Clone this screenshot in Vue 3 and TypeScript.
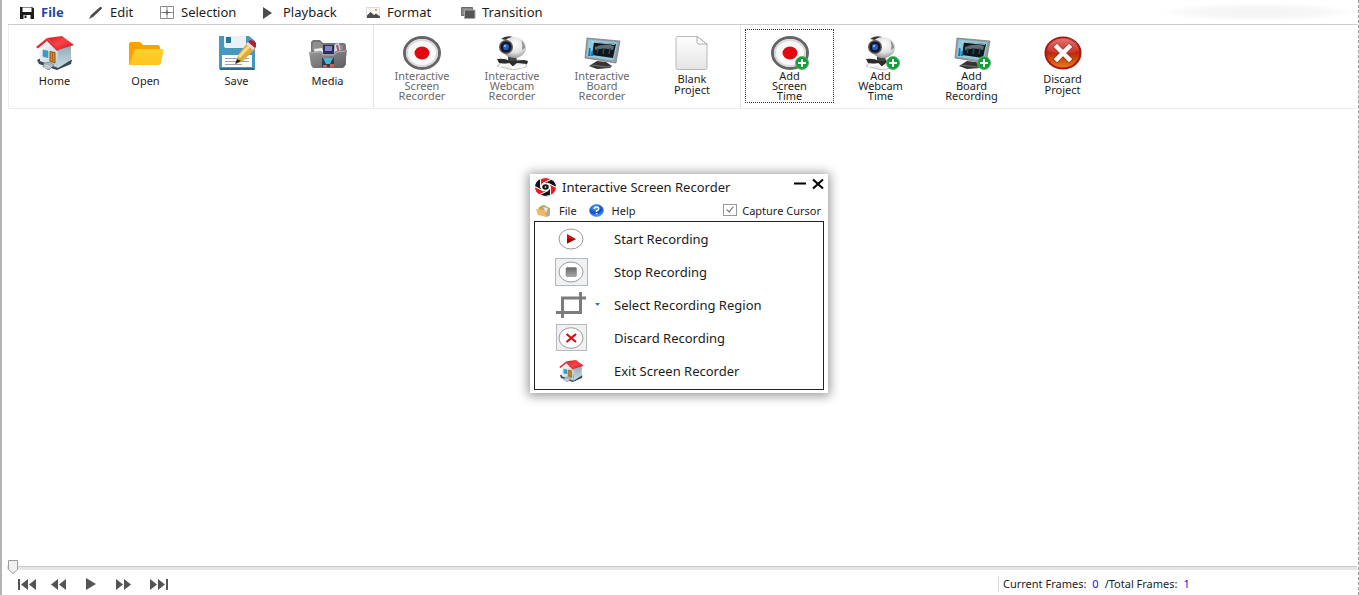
<script setup lang="ts">
import { computed, ref } from 'vue'

interface MenuEntry { label: string; icon: string; active?: boolean }
interface Tool { lines: string[]; icon: string; plus?: boolean; muted?: boolean; focused?: boolean }
interface Action { label: string; icon: string; kind: string; menu?: boolean }

const menu: MenuEntry[] = [
  { label: 'File', icon: 'floppy', active: true },
  { label: 'Edit', icon: 'pen' },
  { label: 'Selection', icon: 'grid' },
  { label: 'Playback', icon: 'tri' },
  { label: 'Format', icon: 'image' },
  { label: 'Transition', icon: 'layers' },
]

const groups: Tool[][] = [
  [
    { lines: ['Home'], icon: 'home' },
    { lines: ['Open'], icon: 'folder' },
    { lines: ['Save'], icon: 'save' },
    { lines: ['Media'], icon: 'media' },
  ],
  [
    { lines: ['Interactive', 'Screen', 'Recorder'], icon: 'record', muted: true },
    { lines: ['Interactive', 'Webcam', 'Recorder'], icon: 'webcam', muted: true },
    { lines: ['Interactive', 'Board', 'Recorder'], icon: 'board', muted: true },
    { lines: ['Blank', 'Project'], icon: 'blank' },
  ],
  [
    { lines: ['Add', 'Screen', 'Time'], icon: 'record', plus: true, focused: true },
    { lines: ['Add', 'Webcam', 'Time'], icon: 'webcam', plus: true },
    { lines: ['Add', 'Board', 'Recording'], icon: 'board', plus: true },
    { lines: ['Discard', 'Project'], icon: 'discard' },
  ],
]

const actions: Action[] = [
  { label: 'Start Recording', icon: 'start', kind: 'plain' },
  { label: 'Stop Recording', icon: 'stop', kind: 'framed' },
  { label: 'Select Recording Region', icon: 'crop', kind: 'plain', menu: true },
  { label: 'Discard Recording', icon: 'cancel', kind: 'framed narrow' },
  { label: 'Exit Screen Recorder', icon: 'home', kind: 'plain small' },
]

const transport = [
  { label: 'First frame', icon: 'first' },
  { label: 'Step back', icon: 'back' },
  { label: 'Play', icon: 'play' },
  { label: 'Step forward', icon: 'forward' },
  { label: 'Last frame', icon: 'last' },
]

const frame = ref(0)
const total = ref(1)
const captureCursor = ref(true)
const thumbLeft = computed(() => `calc((100% - 12px) * ${frame.value / total.value})`)
</script>

<template>
  <div class="app">
    <svg class="defs" aria-hidden="true">
      <defs>
        <linearGradient id="gRoof" x1="0" y1="0" x2="1" y2="1"><stop offset="0" stop-color="#d81c20" /><stop offset=".5" stop-color="#fb4347" /><stop offset="1" stop-color="#c40d14" /></linearGradient>
        <linearGradient id="gWall" x1="0" y1="0" x2="1" y2="1"><stop offset="0" stop-color="#ffffff" /><stop offset="1" stop-color="#b4ccd8" /></linearGradient>
        <linearGradient id="gSide" x1="0" y1="0" x2="0" y2="1"><stop offset="0" stop-color="#8fa9b6" /><stop offset="1" stop-color="#c8dde6" /></linearGradient>
        <linearGradient id="gFolder" x1="0" y1="0" x2="0" y2="1"><stop offset="0" stop-color="#ffd02c" /><stop offset="1" stop-color="#ffc51f" /></linearGradient>
        <linearGradient id="gMetal" x1="0" y1="0" x2="1" y2="1"><stop offset="0" stop-color="#989898" /><stop offset="1" stop-color="#5c5c5c" /></linearGradient>
        <linearGradient id="gPage" x1="0" y1="0" x2="0" y2="1"><stop offset="0" stop-color="#ffffff" /><stop offset="1" stop-color="#e4e4e4" /></linearGradient>
        <linearGradient id="gRed" x1="0" y1="0" x2="0" y2="1"><stop offset="0" stop-color="#e0655c" /><stop offset=".45" stop-color="#c41a14" /><stop offset=".55" stop-color="#bc3404" /><stop offset="1" stop-color="#ec7c20" /></linearGradient>
        <linearGradient id="gStop" x1="0" y1="0" x2="0" y2="1"><stop offset="0" stop-color="#686868" /><stop offset="1" stop-color="#a8a8ac" /></linearGradient>
        <radialGradient id="gBall" cx=".55" cy=".35" r=".65"><stop offset="0" stop-color="#ffffff" /><stop offset=".6" stop-color="#e2e2e2" /><stop offset="1" stop-color="#9b9b9b" /></radialGradient>
        <radialGradient id="gHelp" cx=".4" cy=".25" r=".8"><stop offset="0" stop-color="#5c9cf0" /><stop offset=".6" stop-color="#0c50d0" /><stop offset="1" stop-color="#58b8f8" /></radialGradient>
      </defs>

      <symbol id="floppy" viewBox="0 0 15 13"><path d="M0 1h12l2 1.500V13H0z" fill="#1b1b1b" /><path d="M2.500 1.500h9V6h-9z" fill="#fff" /><path d="M3.500 9h7v4h-7z" fill="#fff" /><path d="M4.500 9.500h2V12h-2z" fill="#1b1b1b" /></symbol>
      <symbol id="pen" viewBox="0 0 15 13"><path d="M0 13l2-4 9-8 1.500 0 .5 1.500L4 11z" fill="#4b4b4b" /></symbol>
      <symbol id="grid" viewBox="0 0 15 13"><path d="M.5.5h13v12H.5zM7 .5v12M.5 6.500h13" fill="none" stroke="#8c8c8c" /><path d="M7 4v5M4.500 6.500h5" stroke="#5c5c5c" /></symbol>
      <symbol id="tri" viewBox="0 0 15 13"><path d="M1 1l9 6-9 6z" fill="#4c4c4c" /></symbol>
      <symbol id="image" viewBox="0 0 15 13"><path d="M.5 1.500h13v10H.5z" fill="#f8f8f8" stroke="#dcdcdc" /><path d="M1 12V9.500L4.500 6 8 9l2-1.500 4 3V12z" fill="#4c4c4c" /><circle cx="10" cy="4" r="1.200" fill="#f6a04c" /></symbol>
      <symbol id="layers" viewBox="0 0 15 13"><path d="M.5 1.500h11v8H.5z" fill="#8a8a8a" stroke="#6a6a6a" /><path d="M3.500 4h10.500v8.500H3.500z" fill="#555" stroke="#aaa" /></symbol>

      <symbol id="home" viewBox="0 0 38 34">
        <path d="M1 24l6-3 29 3-1 4-14 6-18-6z" fill="#3a4853" />
        <path d="M3 11l8-7 11 10v18L4 25z" fill="url(#gWall)" />
        <path d="M22 13l13-4v15l-13 8z" fill="url(#gSide)" />
        <path d="M11 2L26 0l12 9-16 5z" fill="url(#gRoof)" />
        <path d="M11 2L0 11l2 1.500L11 5l10 10 2-1z" fill="#d8343a" />
        <path d="M7 14l5 1v6.500l-5-1z" fill="#26a0dc" stroke="#6b8c9c" stroke-width=".7" />
        <path d="M14 15.500l5 1V27l-5-2z" fill="#e08a20" stroke="#84450a" stroke-width=".9" />
        <path d="M16.500 17v8" stroke="#8b4b10" stroke-width=".7" />
        <path d="M8 27l6-1 4 3-5 5-6-3z" fill="#a9b6be" stroke="#6a7981" stroke-width=".6" />
        <path d="M9 29l6 2M8 31l5 1" stroke="#dfe6ea" stroke-width=".8" />
      </symbol>
      <symbol id="folder" viewBox="0 0 38 34">
        <path d="M2 29V8q0-2 2-2h8q2 0 3 2l1 1h14q3 0 3 3v3z" fill="#ff9f00" />
        <path d="M10 13h25q2 0 1.500 2L34 27q-.5 2-3 2H5q-3 0-2.500-1L7 15q.8-2 3-2z" fill="url(#gFolder)" />
      </symbol>
      <symbol id="save" viewBox="0 0 38 34">
        <path d="M1 0h30l6 5v29H3q-2 0-2-2z" fill="#4698bf" />
        <path d="M6 0h22v10q0 2-2 2H8q-2 0-2-2z" fill="#e9f1f4" />
        <path d="M8 1h5v6H8z" fill="#2b7398" />
        <path d="M4 19h30v12H4z" fill="#fff" />
        <path d="M7 22.500h24M7 25.500h24M7 28.500h17" stroke="#838c93" stroke-width=".8" />
        <path d="M2 32h34v2H2z" fill="#286e94" />
        <path d="M29 7l8 6-12 12-7 3 2-9z" fill="#e4a83c" />
        <path d="M32 9L21 21" stroke="#fbdc88" stroke-width="3" />
        <path d="M30 6l2-2q4 0 7 4l-1 3-2 2z" fill="#b51d2c" />
        <path d="M28 8l2-2 7 6-2 2z" fill="#dcdfe0" />
        <path d="M17 28l2-5 4 2z" fill="#222" />
      </symbol>
      <symbol id="media" viewBox="0 0 38 34">
        <path d="M2 29V6l2-2h7l3 3h20q3 0 3 3v19z" fill="#747474" />
        <path d="M4 6h7l2 3h21v5H3z" fill="#8f8f8f" />
        <path d="M5 13l8-1 2 6-9 3z" fill="#eee" />
        <path d="M14 9h11v9H14z" fill="#302c5d" />
        <path d="M16 10h7v5h-7z" fill="#8088cc" />
        <path d="M26 8l4-1 2 10h-7z" fill="#c4e1ec" />
        <path d="M28 9l2 8" stroke="#be4666" stroke-width="2" />
        <path d="M0 16l12-1 3 3h9l3-3 11-1-2 16-2 2H4l-2-3z" fill="url(#gMetal)" />
        <path d="M1 17l10-1 3 3h11l3-3 9-1" fill="none" stroke="#b0b0b0" />
        <path d="M13 22h12v9H13z" fill="#2f3858" />
        <path d="M14 22h10l-3 6h-4z" fill="#4cb4d0" />
        <path d="M14 29h4v2h-4zM21 28h4v3h-4z" fill="#d0604c" />
      </symbol>
      <symbol id="record" viewBox="0 0 38 34">
        <ellipse cx="19" cy="17" rx="17.500" ry="15.500" fill="#fafafa" stroke="#666" stroke-width="3" />
        <ellipse cx="19" cy="17" rx="15" ry="13" fill="none" stroke="#dadada" stroke-width="2" />
        <ellipse cx="19" cy="17" rx="7.500" ry="6.500" fill="#e30911" />
      </symbol>
      <symbol id="webcam" viewBox="0 0 38 34">
        <path d="M4 30l6-5 16-1 8 2-1 5-13 3z" fill="#f0f0f0" stroke="#b0b0b0" stroke-width=".8" />
        <path d="M4 23q8-1 13 2l14-1 4 1-1 3-10-1-5 4-4-3-9-1z" fill="#2c2c2c" />
        <path d="M15 20h8l1 5h-9z" fill="#444" />
        <path d="M6 30l10-2 4 4 12-2" fill="none" stroke="#fff" stroke-width="2" />
        <path d="M8 3q5-4 12-2l-2 4z" fill="#333" />
        <ellipse cx="21" cy="11.500" rx="12" ry="10.500" fill="url(#gBall)" />
        <path d="M28 4q4 3 4 8l-3 2q1-6-1-10z" fill="#909090" />
        <ellipse cx="13" cy="11" rx="7" ry="7" fill="#565a5e" />
        <ellipse cx="13" cy="11" rx="5.500" ry="5.500" fill="#12161f" />
        <ellipse cx="13" cy="11" rx="3" ry="3.200" fill="#285ec6" />
        <circle cx="12" cy="10" r="1" fill="#a4c8ff" />
      </symbol>
      <symbol id="board" viewBox="0 0 38 34">
        <path d="M14 25l9 1 6 4-2 2-13 1-8-3z" fill="#353535" />
        <path d="M8 29l16 2 5-1" fill="none" stroke="#888" stroke-width=".8" />
        <path d="M4 2l33 3-4 22-31-5z" fill="#9a9e9e" stroke="#70757a" stroke-width=".7" />
        <path d="M5.500 3.500l29 3-4 18-27-4z" fill="#8ecbe0" />
        <path d="M11 6l22 2-3 14-21-3z" fill="#10161c" />
        <path d="M12 11q9-4 19-1l-1 4q-9-3-18 0z" fill="#5c7078" />
        <path d="M15 12l-1 5M21 12l-1 6M27 12l-1 6" stroke="#344850" stroke-width="1.500" />
        <path d="M6 12h1.500v8H5zM8.500 15h1.500v5H8z" fill="#0879b7" />
        <path d="M9 6l23 2.500" stroke="#c4e4ee" stroke-width=".8" />
      </symbol>
      <symbol id="blank" viewBox="0 0 38 34">
        <path d="M5 .5h19l10 7.500v23.500q0 2-2 2H5q-2 0-2-2v-29q0-2 2-2z" fill="url(#gPage)" stroke="#b8b8b8" />
        <path d="M24 .5v6q0 1.500 2 1.500h8z" fill="#fff" stroke="#aaa" />
      </symbol>
      <symbol id="discard" viewBox="0 0 38 34">
        <ellipse cx="19" cy="17" rx="17.500" ry="15.500" fill="url(#gRed)" stroke="#a71714" stroke-width="2" />
        <path d="M3 15q1-12 16-13t16 13q-15 5-32 0z" fill="#fff" opacity=".13" />
        <path d="M13 11l12 12M25 11L13 23" stroke="#8f2010" stroke-width="6.500" stroke-linecap="square" opacity=".35" />
        <path d="M13 11l12 12M25 11L13 23" stroke="#fff" stroke-width="4.500" stroke-linecap="square" />
      </symbol>
      <symbol id="plus" viewBox="0 0 14 14"><circle cx="7" cy="7" r="6.500" fill="#159c39" stroke="#58bb6e" /><path d="M7 3v8M3 7h8" stroke="#fff" stroke-width="2" /></symbol>

      <symbol id="aperture" viewBox="0 0 24 20">
        <g transform="translate(12 10) scale(1.15 .98)" stroke="#fff" stroke-width=".9">
          <path v-for="n in 6" :key="n" d="M4.500 0V8.930A10 10 0 0 1-5.480 8.360L2.250 3.900z" :fill="n % 2 ? '#f01820' : '#141414'" :transform="`rotate(${n * 60})`" />
        </g>
        <ellipse cx="12" cy="10" rx="5" ry="4.200" fill="#fff" />
        <ellipse cx="12" cy="10" rx="3.400" ry="2.900" fill="#141414" />
        <circle cx="12" cy="10" r="1" fill="#bbb" />
      </symbol>
      <symbol id="files" viewBox="0 0 15 13">
        <path d="M2 4l5-3 7 3v7l-4 2z" fill="#d8a04c" /><path d="M4 3l4-2 3 2-2 4z" fill="#8cba70" /><path d="M7 3l5 1-2 5z" fill="#e6e9e1" /><path d="M0 5l8 1 3 7-9-2z" fill="#f0b860" /><path d="M11 13V7l3-2v6z" fill="#8cb4c4" />
      </symbol>
      <symbol id="help" viewBox="0 0 15 13"><ellipse cx="7.500" cy="6.500" rx="7" ry="6" fill="url(#gHelp)" stroke="#3a78d8" stroke-width=".6" /><path d="M5.300 5q0-2 2.200-2t2.200 1.700Q9.700 6 7.600 6.700V8" fill="none" stroke="#fff" stroke-width="1.500" /><path d="M6.800 9h1.600v1.400H6.800z" fill="#fff" /></symbol>
      <symbol id="start" viewBox="0 0 26 22"><ellipse cx="13" cy="11" rx="12" ry="10" fill="#fff" stroke="#9a9a9a" /><path d="M9 6l9 5-9 4.500z" fill="#d50d12" /><path d="M9 11h9l-9 4.500z" fill="#980408" /></symbol>
      <symbol id="stop" viewBox="0 0 26 22"><ellipse cx="13" cy="11" rx="12" ry="10" fill="#fff" stroke="#9a9a9a" /><rect x="8" y="6.500" width="10.500" height="9" rx="1" fill="url(#gStop)" stroke="#777" stroke-width=".5" /></symbol>
      <symbol id="cancel" viewBox="0 0 26 22"><ellipse cx="13" cy="11" rx="12" ry="10.300" fill="#fff" stroke="#9a9a9a" /><path d="M8.500 7l9.500 8M18 7l-9.500 8" stroke="#d30d12" stroke-width="2.200" /></symbol>
      <symbol id="crop" viewBox="0 0 30 26"><path d="M0 20.500h24.500V0M6.500 26V6H30" fill="none" stroke="#7c7c7c" stroke-width="3" /></symbol>

      <symbol id="first" viewBox="0 0 20 12"><path d="M1 1h2v11H1zM11 1v11L4 6.500zM19 1v11l-7-5.500z" fill="#555" /></symbol>
      <symbol id="back" viewBox="0 0 20 12"><path d="M8 1v11L1 6.500zM16 1v11l-7-5.500z" fill="#555" /></symbol>
      <symbol id="play" viewBox="0 0 20 12"><path d="M3 0l10 6-10 6z" fill="#555" /></symbol>
      <symbol id="forward" viewBox="0 0 20 12"><path d="M0 1v11l7-5.500zM8 1v11l7-5.500z" fill="#555" /></symbol>
      <symbol id="last" viewBox="0 0 20 12"><path d="M1 1v11l7-5.500zM9 1v11l7-5.500zM17 1h2v11h-2z" fill="#555" /></symbol>
    </svg>

    <nav class="menubar" aria-label="Main menu">
      <button v-for="m in menu" :key="m.label" class="menu-item" :class="{ active: m.active }" type="button">
        <svg class="menu-icon" aria-hidden="true"><use :href="'#' + m.icon" /></svg>
        <span>{{ m.label }}</span>
      </button>
      <span class="smudge"></span>
    </nav>

    <div class="ribbon" role="toolbar" aria-label="File">
      <div v-for="(g, i) in groups" :key="i" class="group">
        <button v-for="t in g" :key="t.lines.join(' ')" type="button" class="tool" :class="['rows-' + t.lines.length, { muted: t.muted, focused: t.focused }]">
          <span class="pic">
            <svg class="tool-icon" aria-hidden="true"><use :href="'#' + t.icon" /></svg>
            <svg v-if="t.plus" class="plus" aria-hidden="true"><use href="#plus" /></svg>
          </span>
          <span class="caption"><span v-for="l in t.lines" :key="l" class="line">{{ l }}</span></span>
        </button>
      </div>
    </div>

    <main class="stage">
      <section class="dialog" role="dialog" aria-labelledby="recorder-title">
        <header class="titlebar">
          <svg class="logo" aria-hidden="true"><use href="#aperture" /></svg>
          <h1 id="recorder-title">Interactive Screen Recorder</h1>
          <button class="win" type="button" aria-label="Minimize"><svg viewBox="0 0 12 12"><path d="M0 5.500h12" stroke="#000" stroke-width="2" /></svg></button>
          <button class="win" type="button" aria-label="Close"><svg viewBox="0 0 12 12"><path d="M1 1.500l10 9M11 1.500l-10 9" stroke="#000" stroke-width="2" /></svg></button>
        </header>
        <div class="options">
          <button class="option" type="button"><svg aria-hidden="true"><use href="#files" /></svg><span>File</span></button>
          <button class="option" type="button"><svg aria-hidden="true"><use href="#help" /></svg><span>Help</span></button>
          <label class="cursor"><input v-model="captureCursor" type="checkbox" /><span>Capture Cursor</span></label>
        </div>
        <div class="actions">
          <button v-for="a in actions" :key="a.label" class="action" type="button">
            <span class="slot"><span class="holder" :class="a.kind"><svg :class="a.icon" aria-hidden="true"><use :href="'#' + a.icon" /></svg></span></span>
            <span class="arrow"><svg v-if="a.menu" viewBox="0 0 5 3"><path d="M0 0h5L2.500 3z" fill="#2583c5" /></svg></span>
            <span>{{ a.label }}</span>
          </button>
        </div>
      </section>
    </main>

    <div class="timeline">
      <input v-model.number="frame" class="range" type="range" min="0" :max="total" aria-label="Current frame" />
      <svg class="thumb" :style="{ left: thumbLeft }" viewBox="0 0 12 16" aria-hidden="true"><path d="M1.500 1.500h9v9L6 14.500l-4.500-4z" fill="#f1f1f1" stroke="#9d9d9d" /></svg>
    </div>

    <footer class="footer">
      <div class="transport">
        <button v-for="b in transport" :key="b.icon" type="button" :aria-label="b.label"><svg><use :href="'#' + b.icon" /></svg></button>
      </div>
      <p class="status"><span>Current Frames:</span><b>{{ frame }}</b><span>/Total Frames:</span><b>{{ total }}</b></p>
    </footer>
  </div>
</template>

<style>
body { margin: 0; background: #fff; }
</style>

<style scoped>
.app {
  box-sizing: border-box;
  min-height: 100vh;
  display: flex;
  flex-direction: column;
  border-left: 2px solid #b4b4b4;
  border-right: 1px dashed #999;
  background: #fff;
  color: #1c1c1c;
  font-family: "Noto Sans", "Open Sans", sans-serif;
  font-size: 12px;
}
.defs { position: absolute; width: 0; height: 0; }
svg { display: block; flex: none; }
button {
  border: 0;
  padding: 0;
  margin: 0;
  background: none;
  color: inherit;
  font: inherit;
}
.menubar {
  display: grid;
  grid-template-columns: 69px 71px 102px 104px 95px 90px 1fr;
  align-items: center;
  height: 24px;
  margin-left: 6px;
  padding-left: 12px;
  border-bottom: 1px solid #ccc;
}
.menu-item { display: flex; align-items: center; gap: 6px; font-size: 13px; line-height: 20px; }
.menu-item.active { color: #1f489c; font-weight: 700; }
.menu-icon { width: 15px; height: 13px; }
.smudge {
  justify-self: end;
  width: 200px;
  height: 18px;
  background: radial-gradient(closest-side, #f3f3f3, #f7f7f7 60%, #fff);
}
.ribbon {
  display: flex;
  height: 83px;
  margin-left: 6px;
  border-left: 1px solid #eee;
  border-bottom: 1px solid #eee;
}
.group { display: flex; padding: 3px 0; }
.group + .group { border-left: 1px solid #e4e4e4; padding: 3px 3px; }
.tool {
  box-sizing: border-box;
  width: 91px;
  height: 76px;
  display: flex;
  flex-direction: column;
  align-items: center;
  padding-top: 8px;
  font-size: 11px;
}
.group:nth-child(2) .tool { width: 90px; }
.tool.muted { color: #6a6a6a; }
.tool.focused { outline: 1px dotted #333; outline-offset: -2px; }
.pic { position: relative; }
.tool-icon { width: 38px; height: 34px; }
.plus { position: absolute; right: 0; bottom: 0; width: 14px; height: 14px; }
.line { display: block; }
.rows-1 .caption { padding-top: 3px; line-height: 16px; }
.rows-2 .caption { padding-top: 3px; line-height: 11px; }
.rows-3 .caption { padding-top: 1px; line-height: 10px; }
.stage { flex: 1; display: flex; justify-content: center; align-items: flex-start; padding: 65px 2px 0 0; }
.dialog {
  box-sizing: border-box;
  width: 298px;
  padding: 0 4px 3px;
  background: #fff;
  box-shadow: 0 1px 10px 2px rgba(0, 0, 0, .4);
}
.titlebar { display: flex; align-items: center; height: 25px; }
.logo { width: 23px; height: 20px; }
.titlebar h1 { flex: 1; margin: 0 0 0 5px; font-size: 13px; font-weight: 400; line-height: 20px; }
.win { margin: 0 0 6px 6px; }
.win svg { width: 12px; height: 12px; }
.options { display: flex; align-items: center; height: 22px; padding: 0 3px 0 2px; font-size: 11px; }
.option { display: flex; align-items: center; gap: 8px; margin-right: 12px; }
.option svg { width: 15px; height: 13px; }
.cursor { display: flex; align-items: center; gap: 5px; margin-left: auto; }
.cursor input {
  appearance: none;
  box-sizing: border-box;
  position: relative;
  width: 14px;
  height: 12px;
  margin: 0;
  border: 1px solid #999;
  background: #fff;
}
.cursor input:checked::after {
  content: "";
  position: absolute;
  left: 4px;
  top: 0;
  width: 3px;
  height: 6px;
  border: solid #666;
  border-width: 0 1px 1px 0;
  transform: rotate(40deg);
}
.actions { border: 1px solid #222; padding-bottom: 2px; }
.action { display: flex; align-items: center; width: 100%; height: 33px; font-size: 13px; text-align: left; }
.slot { width: 72px; display: flex; justify-content: center; }
.arrow { width: 7px; }
.arrow svg { width: 5px; height: 3px; margin-left: -12px; }
.holder { display: flex; align-items: center; justify-content: center; box-sizing: border-box; }
.holder svg { width: 26px; height: 22px; }
.holder svg.crop { width: 30px; height: 26px; }
.holder.small svg { width: 25px; height: 22px; }
.framed { width: 33px; height: 28px; border: 1px solid #b5b9bd; background: #eff1f3; }
.framed.narrow { width: 31px; height: 27px; }
.timeline { position: relative; height: 16px; margin: 0 1px 0 5px; }
.range {
  appearance: none;
  display: block;
  width: 100%;
  height: 16px;
  margin: 0;
  background: linear-gradient(#ccc, #ccc) 0 7px / 100% 1px no-repeat, linear-gradient(#e6e6e6, #e6e6e6) 0 8px / 100% 3px no-repeat;
}
.range::-webkit-slider-thumb { appearance: none; width: 12px; height: 16px; opacity: 0; }
.thumb { position: absolute; top: 0; width: 12px; height: 16px; pointer-events: none; }
.footer { display: flex; align-items: center; justify-content: space-between; height: 18px; padding-bottom: 2px; }
.transport { display: flex; gap: 13px; padding-left: 15px; }
.transport svg { width: 20px; height: 12px; }
.status {
  display: flex;
  gap: 6px;
  width: 355px;
  margin: 0;
  padding-left: 4px;
  border-left: 1px solid #ddd;
  font-size: 11px;
  line-height: 16px;
}
.status b { font-weight: 400; color: #1414e0; }
</style>
